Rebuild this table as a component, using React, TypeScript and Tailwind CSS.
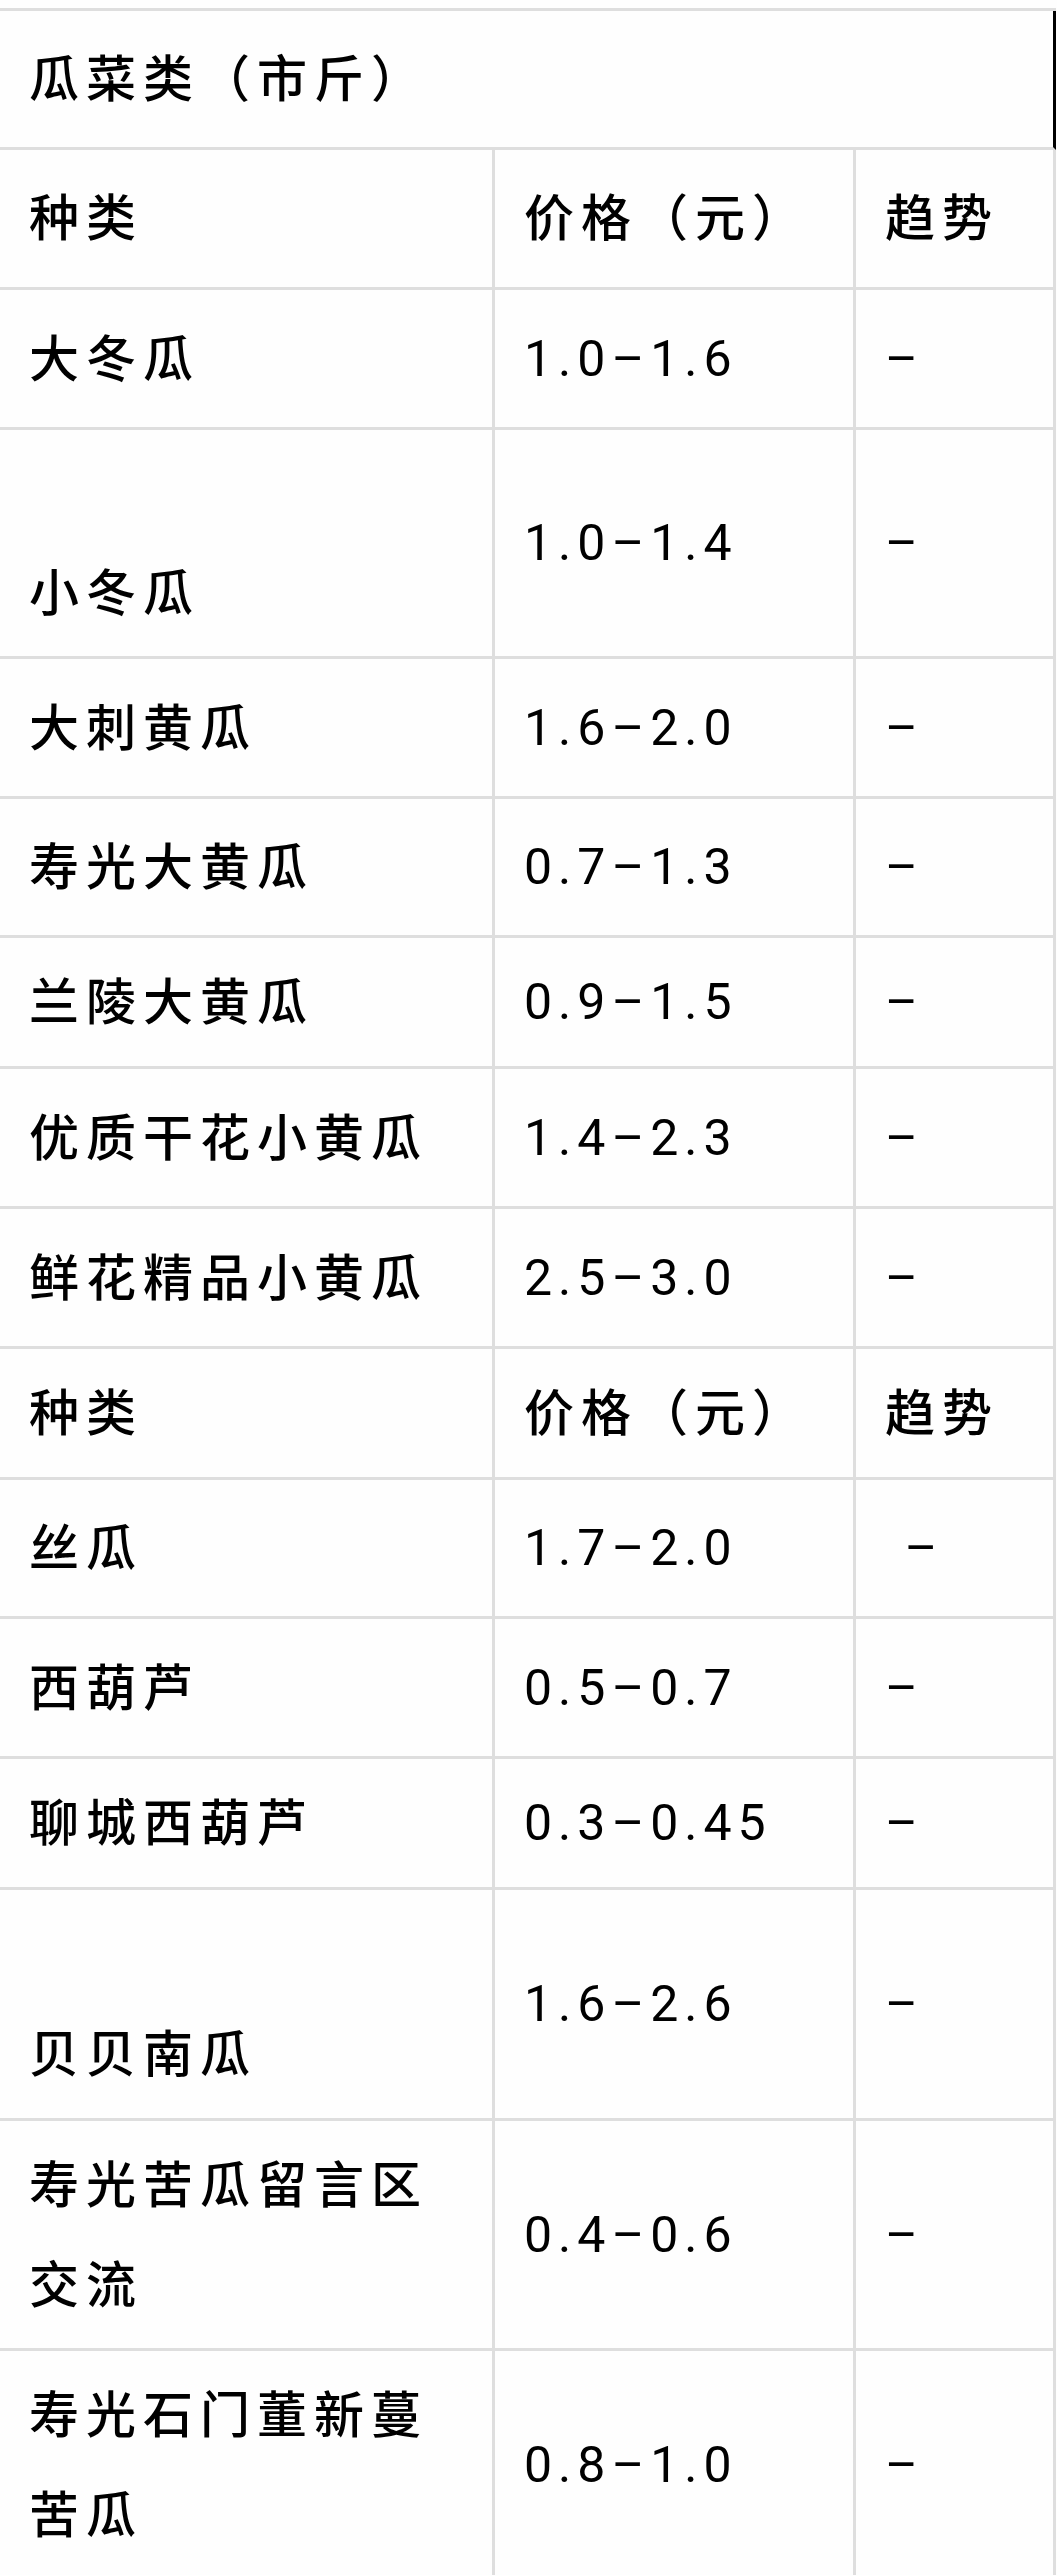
const FONT = { fontFamily: '"Noto Sans CJK SC", "Noto Sans", sans-serif' };
const NUM_FONT = { fontFamily: 'Roboto, "Noto Sans CJK SC", sans-serif' };

type Row =
  | { kind: 'title'; h: string }
  | { kind: 'head'; h: string }
  | { kind: 'item'; name: string[]; price: string; trend: string; h: string };

const ROWS: Row[] = [
  { kind: 'title', h: 'h-[139px]' },
  { kind: 'head', h: 'h-[140px]' },
  { kind: 'item', name: ['大冬瓜'], price: '1.0–1.6', trend: '–', h: 'h-[140px]' },
  { kind: 'item', name: ['', '小冬瓜'], price: '1.0–1.4', trend: '–', h: 'h-[229px]' },
  { kind: 'item', name: ['大刺黄瓜'], price: '1.6–2.0', trend: '–', h: 'h-[140px]' },
  { kind: 'item', name: ['寿光大黄瓜'], price: '0.7–1.3', trend: '–', h: 'h-[139px]' },
  { kind: 'item', name: ['兰陵大黄瓜'], price: '0.9–1.5', trend: '–', h: 'h-[131px]' },
  { kind: 'item', name: ['优质干花小黄瓜'], price: '1.4–2.3', trend: '–', h: 'h-[140px]' },
  { kind: 'item', name: ['鲜花精品小黄瓜'], price: '2.5–3.0', trend: '–', h: 'h-[140px]' },
  { kind: 'head', h: 'h-[131px]' },
  { kind: 'item', name: ['丝瓜'], price: '1.7–2.0', trend: '\u00a0–', h: 'h-[139px]' },
  { kind: 'item', name: ['西葫芦'], price: '0.5–0.7', trend: '–', h: 'h-[140px]' },
  { kind: 'item', name: ['聊城西葫芦'], price: '0.3–0.45', trend: '–', h: 'h-[131px]' },
  { kind: 'item', name: ['', '贝贝南瓜'], price: '1.6–2.6', trend: '–', h: 'h-[231px]' },
  { kind: 'item', name: ['寿光苦瓜留言区', '交流'], price: '0.4–0.6', trend: '–', h: 'h-[230px]' },
  { kind: 'item', name: ['寿光石门董新蔓', '苦瓜'], price: '0.8–1.0', trend: '–', h: 'h-[230px]' },
];

const border = 'flex items-center pl-[29px] border-b-[3px] border-r-[3px] border-[#dedede]';
const cell = `${border} pb-[8px]`;
const numCell = `${border} pt-[1px] font-normal`;

function Cells({ row }: { row: Row }) {
  if (row.kind === 'title') {
    return (
      <div className={`${cell} ${row.h} col-span-3 border-r-black`}>
        瓜菜类（市斤）
      </div>
    );
  }
  if (row.kind === 'head') {
    return (
      <>
        <div className={`${cell} ${row.h}`}>种类</div>
        <div className={`${cell} ${row.h}`}>价格（元）</div>
        <div className={`${cell} ${row.h}`}>趋势</div>
      </>
    );
  }
  return (
    <>
      <div className={`${cell} ${row.h}`}>
        <div className="flex flex-col">
          {row.name.map((line, i) => (
            <div key={i} className="h-[100px] leading-[100px]">
              {line}
            </div>
          ))}
        </div>
      </div>
      <div className={`${numCell} ${row.h} tracking-[6px]`} style={NUM_FONT}>
        {row.price}
      </div>
      <div className={`${numCell} ${row.h} whitespace-pre`} style={NUM_FONT}>
        {row.trend}
      </div>
    </>
  );
}

export default function App() {
  return (
    <div className="min-h-[2575px] w-[1057px] overflow-hidden bg-[#fefefe] pt-[8px] text-black" style={FONT}>
      <div className="grid w-[1056px] grid-cols-[495px_361px_200px] border-t-[3px] border-[#dedede] text-[50px] font-medium tracking-[7px]">
        {ROWS.map((row, i) => (
          <Cells key={i} row={row} />
        ))}
      </div>
    </div>
  );
}
